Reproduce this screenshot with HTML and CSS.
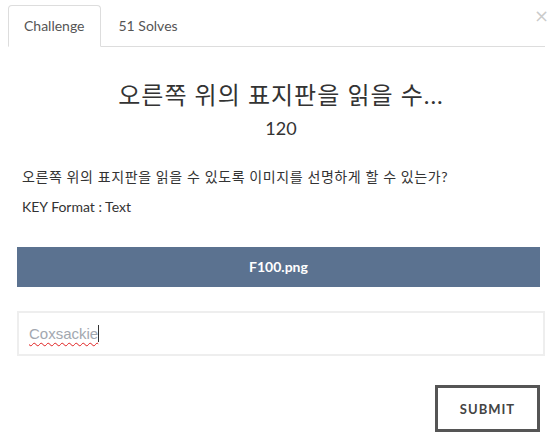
FILE: index.html
```html
<!DOCTYPE html>
<html>
<head>
    <meta charset="utf-8">
    <title>Challenge</title>
    <link rel="stylesheet" href="styles.css">
</head>
<body>
    <div class="modal">
        <button class="close" type="button">&times;</button>
        <ul class="tabs">
            <li class="tab active">Challenge</li>
            <li class="tab">51 Solves</li>
        </ul>
        <div class="pane">
            <h3 class="chal-name">오른쪽 위의 표지판을 읽을 수...</h3>
            <h4 class="chal-value">120</h4>
            <div class="chal-desc">
                <p class="ko">오른쪽 위의 표지판을 읽을 수 있도록 이미지를 선명하게 할 수 있는가?</p>
                <p>KEY Format : Text</p>
            </div>
            <a class="file-btn">F100.png</a>
            <div class="answer"><span class="typed">Coxsackie</span><span class="caret"></span></div>
            <div class="actions">
                <button class="submit" type="button">SUBMIT</button>
            </div>
        </div>
    </div>
</body>
</html>
```
FILE: styles.css
```css
html, body
{
    margin: 0;
    background: #fff;
}
body
{
    font-family: Lato, "Noto Sans CJK KR", sans-serif;
    color: #333;
    font-size: 14px;
}
.modal
{
    position: relative;
    padding: 5px 11px 0 8px;
}
.close
{
    position: absolute;
    top: 6px;
    right: 7px;
    border: 0;
    background: none;
    padding: 0;
    font-family: "DejaVu Sans", sans-serif;
    font-size: 18px;
    color: #000;
    opacity: .2;
    line-height: 20px;
}
.tabs
{
    display: flex;
    margin: 0;
    padding: 0;
    list-style: none;
    border-bottom: 1px solid #ddd;
}
.tab
{
    padding: 10px 15px;
    line-height: 20px;
    color: #555;
    margin-bottom: -1px;
    border: 1px solid transparent;
    border-radius: 4px 4px 0 0;
    margin-right: 2px;
}
.tab.active
{
    border-color: #ddd #ddd transparent;
    background: #fff;
}
.pane
{
    padding: 0 0 0 9px;
}
.chal-name
{
    margin: 34px 0 0;
    text-align: center;
    font-weight: normal;
    font-size: 24px;
    letter-spacing: 1px;
    line-height: 28px;
}
.chal-value
{
    margin: 7px 0 0;
    text-align: center;
    font-weight: normal;
    font-size: 18px;
    line-height: 24px;
}
.chal-desc
{
    margin-top: 27px;
    padding-left: 5px;
}
.chal-desc p
{
    margin: 0 0 10px;
    line-height: 20px;
}
.chal-desc .ko
{
    letter-spacing: 0.6px;
}
.file-btn
{
    display: block;
    margin: 30px 5px 0 0;
    height: 40px;
    line-height: 40px;
    background: #5b7290;
    color: #fff;
    font-weight: bold;
    text-align: center;
}
.answer
{
    margin-top: 24px;
    height: 41px;
    border: 2px solid #eee;
    display: flex;
    align-items: center;
    padding-left: 10px;
    font-family: "Liberation Sans", sans-serif;
    font-size: 15px;
    color: #a3a8b0;
}
.typed
{
    text-decoration: underline wavy #e02020;
    text-decoration-thickness: 1px;
    text-underline-offset: 3px;
}
.caret
{
    display: inline-block;
    width: 1px;
    height: 17px;
    background: #333;
}
.actions
{
    display: flex;
    justify-content: flex-end;
    margin: 29px 5px 0 0;
}
.submit
{
    width: 105px;
    height: 47px;
    border: 3px solid #555;
    background: #fff;
    font-family: Lato, sans-serif;
    font-weight: bold;
    font-size: 13px;
    letter-spacing: 1px;
    color: #444;
}
```
